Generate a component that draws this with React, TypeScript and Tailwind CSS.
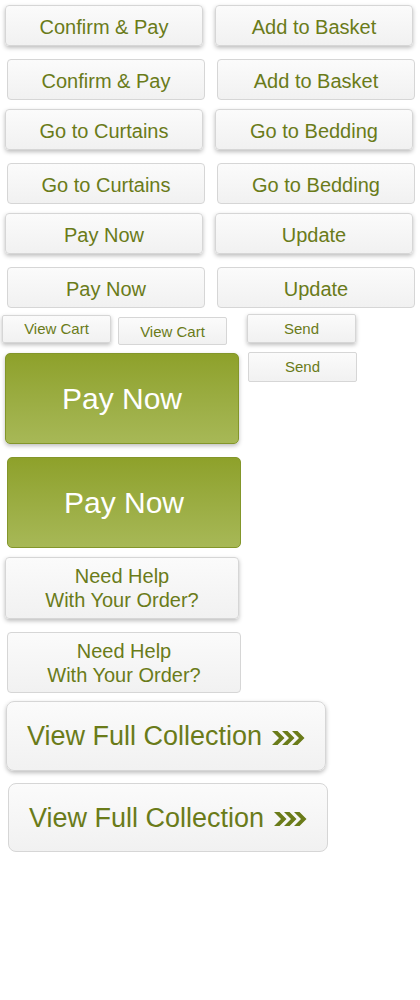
import React from "react";

const light =
  "flex items-center justify-center text-center text-[#6a7b19] border border-[#d6d6d6] bg-gradient-to-b from-[#fbfbfb] to-[#f1f1f1]";
const raised = "shadow-[0_2px_4px_rgba(0,0,0,0.26)]";

function Chevrons() {
  return (
    <svg width="33" height="14" viewBox="0 0 33 14" className="ml-[10px] mt-[2px] shrink-0">
      {[0, 10, 20].map((x) => (
        <polygon
          key={x}
          points={`${x},0 ${x + 5.5},0 ${x + 12.5},7 ${x + 5.5},14 ${x},14 ${x + 7},7`}
          fill="#6a7b19"
        />
      ))}
    </svg>
  );
}

function PairRow({ a, b, pressed, mt }: { a: string; b: string; pressed?: boolean; mt: string }) {
  const cls = `${light} w-[198px] h-[41px] rounded-[4px] text-[20px] pt-[2px] ${pressed ? "" : raised}`;
  return (
    <div className={`flex ${mt} ${pressed ? "pl-[7px]" : "pl-[5px]"} gap-[12px]`}>
      <div className={cls}>{a}</div>
      <div className={cls}>{b}</div>
    </div>
  );
}

export default function App() {
  return (
    <div
      className="w-[420px] h-[1000px] bg-white overflow-hidden flex flex-col"
      style={{ fontFamily: '"Liberation Sans", Arial, sans-serif' }}
    >
      <PairRow a="Confirm & Pay" b="Add to Basket" mt="mt-[5px]" />
      <PairRow a="Confirm & Pay" b="Add to Basket" mt="mt-[13px]" pressed />
      <PairRow a="Go to Curtains" b="Go to Bedding" mt="mt-[9px]" />
      <PairRow a="Go to Curtains" b="Go to Bedding" mt="mt-[13px]" pressed />
      <PairRow a="Pay Now" b="Update" mt="mt-[9px]" />
      <PairRow a="Pay Now" b="Update" mt="mt-[13px]" pressed />

      <div className="flex items-start">
        <div className="flex flex-col w-[245px]">
          <div className="flex items-start mt-[7px]">
            <div className={`${light} ${raised} ml-[2px] w-[109px] h-[28px] rounded-[2px] text-[15px]`}>
              View Cart
            </div>
            <div className={`${light} ml-[7px] mt-[2px] w-[109px] h-[28px] rounded-[2px] text-[15px] pt-[2px]`}>
              View Cart
            </div>
          </div>
          <div className="ml-[5px] mt-[8px] w-[234px] h-[91px] rounded-[5px] border border-[#83962a] bg-gradient-to-b from-[#8ea12a] to-[#a7b856] text-white text-[30px] flex items-center justify-center shadow-[0_2px_4px_rgba(0,0,0,0.26)]">
            Pay Now
          </div>
          <div className="ml-[7px] mt-[13px] w-[234px] h-[91px] rounded-[5px] border border-[#83962a] bg-gradient-to-b from-[#8ea12a] to-[#a7b856] text-white text-[30px] flex items-center justify-center">
            Pay Now
          </div>
          <div className={`${light} ${raised} ml-[5px] mt-[9px] w-[234px] h-[62px] rounded-[4px] text-[20px] leading-[24px]`}>
            Need Help
            <br />
            With Your Order?
          </div>
          <div className={`${light} ml-[7px] mt-[13px] w-[234px] h-[61px] rounded-[4px] text-[20px] leading-[24px]`}>
            Need Help
            <br />
            With Your Order?
          </div>
        </div>
        <div className="flex flex-col">
          <div className={`${light} ${raised} ml-[2px] mt-[6px] w-[109px] h-[29px] rounded-[2px] text-[15px] pt-[2px]`}>
            Send
          </div>
          <div className={`${light} ml-[3px] mt-[9px] w-[109px] h-[30px] rounded-[2px] text-[15px]`}>
            Send
          </div>
        </div>
      </div>

      <div className={`${light} ${raised} ml-[6px] mt-[8px] w-[320px] h-[70px] rounded-[8px] text-[27px] pt-[1px]`}>
        View Full Collection
        <Chevrons />
      </div>
      <div className={`${light} ml-[8px] mt-[12px] w-[320px] h-[69px] rounded-[8px] text-[27px] pt-[1px]`}>
        View Full Collection
        <Chevrons />
      </div>
    </div>
  );
}
